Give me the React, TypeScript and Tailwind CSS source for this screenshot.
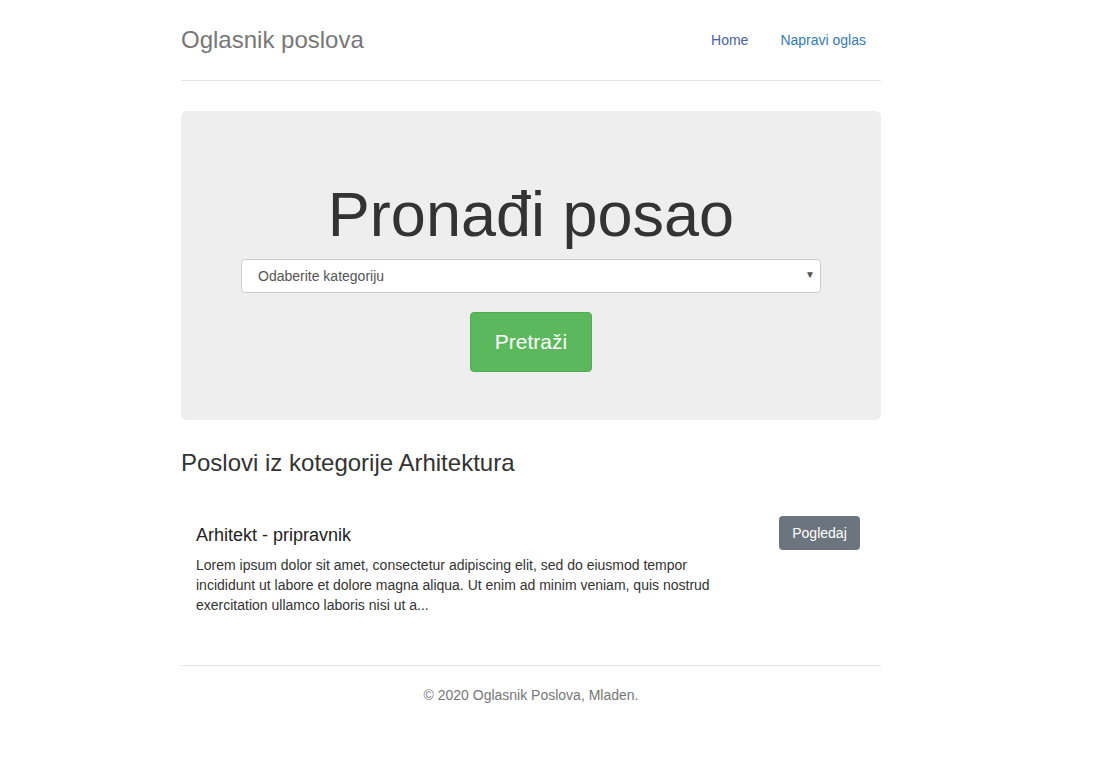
export default function App() {
  return (
    <div className="min-h-screen bg-white font-['Liberation_Sans',Arial,sans-serif] text-[14px] text-[#333]">
      <div className="ml-[181px] w-[700px] pt-[20px]">
        {/* header */}
        <div className="flex items-center justify-between border-b border-[#e5e5e5] pb-[20px]">
          <h3 className="text-[24px] leading-[40px] text-[#777]">Oglasnik poslova</h3>
          <nav className="flex gap-[2px]">
            <a href="#" className="px-[15px] py-[10px] leading-[20px] text-[#4a63a8]">
              Home
            </a>
            <a href="#" className="px-[15px] py-[10px] leading-[20px] text-[#337ab7]">
              Napravi oglas
            </a>
          </nav>
        </div>

        {/* jumbotron */}
        <div className="mt-[30px] mb-[30px] rounded-[6px] bg-[#eee] px-[60px] pt-[69px] pb-[48px] text-center">
          <h1 className="mb-[10px] text-[63px] leading-[69px] text-[#333]">Pronađi posao</h1>
          <div className="relative mb-[19px]">
            <select className="h-[34px] w-full appearance-none rounded-[4px] border border-[#ccc] bg-white px-[16px] text-[14px] text-[#555]">
              <option>Odaberite kategoriju</option>
            </select>
            <span className="pointer-events-none absolute right-[6px] top-[8px] text-[10px] text-[#555]">▼</span>
          </div>
          <button className="h-[60px] w-[122px] rounded-[4px] border border-[#4cae4c] bg-[#5cb85c] text-[21px] text-white">
            Pretraži
          </button>
        </div>

        <h3 className="text-[24px] leading-[26px]">Poslovi iz kotegorije Arhitektura</h3>

        {/* job list */}
        <div className="mt-[40px] flex items-start justify-between pl-[15px] pr-[21px]">
          <div className="w-[530px] pt-[9px]">
            <h4 className="text-[18px] leading-[20px] text-[#222]">Arhitekt - pripravnik</h4>
            <p className="mt-[10px] leading-[20px]">
              Lorem ipsum dolor sit amet, consectetur adipiscing elit, sed do eiusmod tempor incididunt ut labore et dolore
              magna aliqua. Ut enim ad minim veniam, quis nostrud exercitation ullamco laboris nisi ut a...
            </p>
          </div>
          <button className="h-[34px] w-[81px] rounded-[4px] bg-[#6c757d] text-[14px] text-white">Pogledaj</button>
        </div>

        {/* footer */}
        <footer className="mt-[50px] border-t border-[#e5e5e5] pt-[19px] pb-[20px] text-center leading-[20px] text-[#777]">
          © 2020 Oglasnik Poslova, Mladen.
        </footer>
      </div>
    </div>
  );
}
